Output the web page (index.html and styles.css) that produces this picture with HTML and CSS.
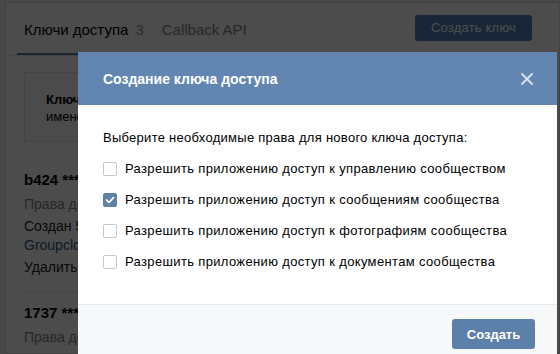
FILE: index.html
```html
<!DOCTYPE html>
<html lang="ru">
<head>
<meta charset="utf-8">
<link rel="stylesheet" href="styles.css">
</head>
<body>
<div class="page">
  <div class="card">
    <div class="tabs">
      <div class="tab active">Ключи доступа <span class="count">3</span></div>
      <div class="tab">Callback API</div>
      <div class="spacer"></div>
      <button class="btn-primary">Создать ключ</button>
    </div>
    <div class="content">
      <div class="info">
        <b>Ключи</b><br>
        именем
      </div>
      <div class="key">
        <div class="key-name">b424 ****</div>
        <div class="key-line">Права до</div>
        <div class="key-line dark">Создан 5</div>
        <div class="key-line link">Groupclo</div>
        <div class="key-line dark">Удалить</div>
      </div>
      <div class="key">
        <div class="key-name">1737 ****</div>
        <div class="key-line">Права до</div>
      </div>
    </div>
  </div>
</div>
<div class="overlay"></div>
<div class="modal">
  <div class="modal-head">
    <div class="modal-title">Создание ключа доступа</div>
    <svg class="close" width="14" height="14" viewBox="0 0 14 14"><path d="M2 2 L12 12 M12 2 L2 12" stroke="#dbe4ef" stroke-width="1.8" stroke-linecap="round"/></svg>
  </div>
  <div class="modal-body">
    <div class="lead">Выберите необходимые права для нового ключа доступа:</div>
    <div class="opts">
      <label class="opt"><span class="cb"></span>Разрешить приложению доступ к управлению сообществом</label>
      <label class="opt"><span class="cb on"><svg width="10" height="8" viewBox="0 0 10 8"><path d="M1.5 4 L4 6.3 L8.5 1.7" fill="none" stroke="#fff" stroke-width="1.7" stroke-linecap="round" stroke-linejoin="round"/></svg></span>Разрешить приложению доступ к сообщениям сообщества</label>
      <label class="opt"><span class="cb"></span>Разрешить приложению доступ к фотографиям сообщества</label>
      <label class="opt"><span class="cb"></span>Разрешить приложению доступ к документам сообщества</label>
    </div>
  </div>
  <div class="modal-foot">
    <button class="btn-create">Создать</button>
  </div>
</div>
</body>
</html>
```
FILE: styles.css
```css
* { box-sizing: border-box; }
html, body { margin: 0; height: 100%; overflow: hidden; }
body {
  background: #edeef0;
  font-family: "Liberation Sans", Arial, sans-serif;
  color: #000;
  position: relative;
}
.page { padding: 2px 0 0 5px; height: 100%; }
.card {
  background: #fff;
  border: 1px solid #dcdcdc;
  height: 100%;
}
.tabs {
  display: flex;
  align-items: center;
  height: 53px;
  padding: 0 27px 0 11px;
  border-bottom: 1px solid #e7e8ec;
}
.tab {
  font-size: 15px;
  color: #828282;
  padding: 0 7px;
  height: 100%;
  display: flex;
  align-items: center;
  margin-right: 4px;
}
.tab.active { color: #000; border-bottom: 2px solid #5181b8; padding-top: 2px; }
.count { color: #939393; margin-left: 7px; }
.spacer { flex: 1; }
.btn-primary {
  background: #5181b8;
  color: #fff;
  border: 0;
  border-radius: 3px;
  font: 13px "Liberation Sans", Arial, sans-serif;
  letter-spacing: 0.2px;
  width: 117px;
  height: 26px;
  margin-top: -3px;
}
.content { padding: 16px 18px 0 18px; }
.info {
  border: 1px solid #e3e4e8;
  background: #fafbfc;
  height: 70px;
  padding: 18px 20px 0 21px;
  font-size: 13px;
  line-height: 17px;
  margin-bottom: 29px;
}
.key { padding-bottom: 14px; border-bottom: 1px solid #e7e8ec; margin-bottom: 11px; }
.key:last-child { border-bottom: 0; }
.key-name { font-weight: bold; font-size: 15px; height: 22px; }
.key-line { font-size: 14px; color: #828282; line-height: 22px; }
.key-line.dark { color: #222; }
.key-line.link { color: #2a5885; margin-top: -3px; }
.overlay {
  position: absolute;
  inset: 0;
  background: rgba(0, 0, 0, 0.7);
}
.modal {
  position: absolute;
  left: 78px;
  top: 52px;
  width: 479px;
  background: #fff;
}
.modal-head {
  background: #6286b1;
  height: 53px;
  display: flex;
  align-items: center;
  justify-content: space-between;
  padding: 0 23px 0 25px;
}
.modal-title { color: #fff; font-weight: bold; font-size: 14px; }
.close { display: block; }
.modal-body { height: 199px; padding: 24px 25px 0 25px; }
.lead { font-size: 13px; letter-spacing: 0.27px; color: #000; line-height: 18px; margin-bottom: 13px; }
.opts { display: flex; flex-direction: column; gap: 13px; }
.opt { display: flex; align-items: center; font-size: 13px; letter-spacing: 0.35px; line-height: 18px; color: #000; }
.cb {
  width: 14px;
  height: 14px;
  border: 1px solid #c5c8cc;
  border-radius: 2px;
  margin-right: 8px;
  display: flex;
  align-items: center;
  justify-content: center;
  flex: none;
}
.cb.on { background: #5e81a8; border-color: #5e81a8; }
.cb svg { display: block; }
.modal-foot {
  background: #f7f8fa;
  border-top: 1px solid #e7e8ec;
  padding: 14px 22px 15px 0;
  display: flex;
  justify-content: flex-end;
}
.btn-create {
  background: #5d80aa;
  color: #fff;
  border: 0;
  border-radius: 3px;
  font: bold 13px "Liberation Sans", Arial, sans-serif;
  width: 83px;
  height: 30px;
}
```
